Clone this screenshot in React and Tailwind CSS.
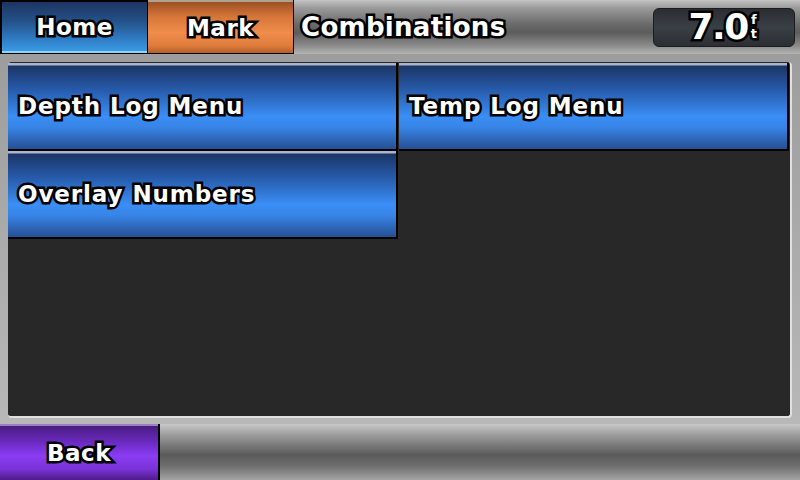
import React from "react";

const outline = "[-webkit-text-stroke:5px_#000] [paint-order:stroke_fill]";

const MenuButton = ({ label }) => (
  <button className="h-[88px] flex items-center pl-[10px] text-left border-r-2 border-b-2 border-black bg-[linear-gradient(to_bottom,#a9b6cc_0px,#a9b6cc_2px,#1b3566_3px,#2659a8_30%,#3a8ef5_62%,#3784e6_75%,#264f92_100%)]">
    <span className={`text-white text-[23px] tracking-[0.9px] ${outline}`}>{label}</span>
  </button>
);

const App = () => {
  const items = ["Depth Log Menu", "Temp Log Menu", "Overlay Numbers"];

  return (
    <div className="w-[800px] h-[480px] flex flex-col bg-[#a7a7a7] font-['DejaVu_Sans',sans-serif] font-bold overflow-hidden">
      {/* Top bar */}
      <div className="h-[54px] flex bg-black">
        <div className="w-[147px] pl-[2px] pt-[2px] pb-[1px]">
          <div className="h-full flex items-center justify-center pt-[2px] border-b-2 border-[#8fd4ff] bg-[linear-gradient(to_bottom,#1d3560_0%,#24528a_40%,#2f7cc4_75%,#3a9ae6_100%)]">
            <span className={`text-white text-[23px] tracking-[0.5px] ${outline}`}>Home</span>
          </div>
        </div>
        <div className="w-[147px] pl-[1px] pr-[1px] pb-[1px]">
          <div className="h-full flex items-center justify-center pt-[2px] border-t-2 border-[#b0a090] bg-[linear-gradient(to_bottom,#9c5024_0%,#d8773a_30%,#f08d4c_60%,#e07d3c_85%,#b55e28_100%)]">
            <span className={`text-white text-[23px] tracking-[0.5px] ${outline}`}>Mark</span>
          </div>
        </div>
        <div className="flex-1 flex items-center justify-between pl-[7px] pr-[5px] bg-[linear-gradient(to_bottom,#c4c4c4_0%,#9a9a9a_15%,#6a6a6a_45%,#5c5c5c_60%,#8c8c8c_85%,#b4b4b4_100%)]">
          <span className={`text-white text-[26px] tracking-[0.3px] ${outline}`}>Combinations</span>
          <div className="w-[142px] h-[39px] rounded-[6px] border border-[#1c1c1c] bg-[linear-gradient(to_bottom,#2a2e33_0%,#3a3f46_50%,#2b2f34_100%)] flex items-center justify-end pr-[37px]">
            <span className={`text-white text-[36px] leading-none tracking-[-1.5px] ${outline}`}>7.0</span>
            <div className={`flex flex-col items-center text-white text-[13px] ml-[3px] ${outline}`}>
              <span className="block h-[14px] leading-[14px]">f</span>
              <span className="block h-[14px] leading-[14px]">t</span>
            </div>
          </div>
        </div>
      </div>

      {/* Content frame */}
      <div className="flex-1 px-[8px] pt-[8px] pb-[6px] bg-[linear-gradient(to_bottom,#9d9d9d,#b8b8b8)]">
        <div className="h-full rounded-[4px] bg-[#282828] border-b-2 border-r-2 border-[#e0e0e0] pt-[1px] pr-[1px]">
          <div className="grid grid-cols-2 gap-x-[1px]">
            {items.map((item) => (
              <MenuButton key={item} label={item} />
            ))}
          </div>
        </div>
      </div>

      {/* Bottom bar */}
      <div className="h-[56px] flex bg-black">
        <div className="w-[158px] flex items-center justify-center border-t-2 border-[#9a80c0] bg-[linear-gradient(to_bottom,#4a1c80_0%,#6a2ac0_30%,#8a3cf2_55%,#7a32d8_80%,#4e1c88_100%)]">
          <span className={`text-white text-[23px] tracking-[0.5px] ${outline}`}>Back</span>
        </div>
        <div className="w-[2px] bg-black" />
        <div className="flex-1 bg-[linear-gradient(to_bottom,#c8c8c8_0%,#9c9c9c_20%,#5a5a5a_55%,#6e6e6e_75%,#a4a4a4_100%)]" />
      </div>
    </div>
  );
};

export default App;
